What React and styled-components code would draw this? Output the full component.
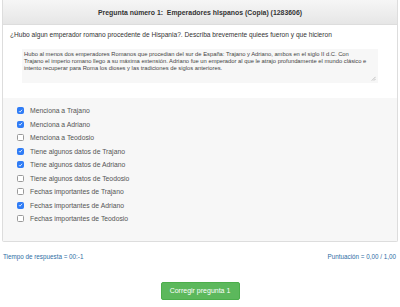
import React from "react";
import styled, { createGlobalStyle } from "styled-components";

const GlobalStyle = createGlobalStyle`
  body {
    margin: 0;
    background: #fff;
    font-family: "Liberation Sans", Arial, sans-serif;
  }
`;

const items = [
  { label: "Menciona a Trajano", checked: true },
  { label: "Menciona a Adriano", checked: true },
  { label: "Menciona a Teodosio", checked: false },
  { label: "Tiene algunos datos de Trajano", checked: true },
  { label: "Tiene algunos datos de Adriano", checked: true },
  { label: "Tiene algunos datos de Teodosio", checked: false },
  { label: "Fechas importantes de Trajano", checked: false },
  { label: "Fechas importantes de Adriano", checked: true },
  { label: "Fechas importantes de Teodosio", checked: false },
];

const answerLines = [
  "Hubo al menos dos emperadores Romanos que procedian del sur de España: Trajano y Adriano, ambos en el siglo II d.C. Con",
  "Trajano el imperio romano llego a su máxima extensión. Adriano fue un emperador al que le atrajo profundamente el mundo clásico e",
  "intento recuperar para Roma los dioses y las tradiciones de siglos anteriores.",
];

const App = () => {
  return (
    <Page>
      <GlobalStyle />
      <Panel>
        <Heading>Pregunta número 1:&nbsp; Emperadores hIspanos (Copia) (1283606)</Heading>
        <Body>
          <Question>
            ¿Hubo algun emperador romano procedente de Hispania?. Describa brevemente quiees fueron y que hicieron
          </Question>
          <Answer>
            {answerLines.map((line) => (
              <Line key={line}>{line}</Line>
            ))}
            <Grip viewBox="0 0 6 6">
              <path d="M5.5 1 L1 5.5 M5.5 3.5 L3.5 5.5" stroke="#999" strokeWidth="0.7" />
            </Grip>
          </Answer>
        </Body>
        <Checklist>
          {items.map((item) => (
            <Item key={item.label}>
              <Box $checked={item.checked}>
                {item.checked && (
                  <svg viewBox="0 0 8 8" width="6" height="6">
                    <path d="M1.5 4.2 L3.2 5.9 L6.5 2" fill="none" stroke="#fff" strokeWidth="1.3" />
                  </svg>
                )}
              </Box>
              <span>{item.label}</span>
            </Item>
          ))}
        </Checklist>
      </Panel>
      <Footer>
        <Info>Tiempo de respuesta = 00:-1</Info>
        <Info>Puntuación = 0,00 / 1,00</Info>
      </Footer>
      <Actions>
        <Button>Corregir pregunta 1</Button>
      </Actions>
    </Page>
  );
};

export default App;

const Page = styled.div`
  padding: 0 2px;
  width: 400px;
  box-sizing: border-box;
`;

const Panel = styled.section`
  border: 1px solid #ddd;
  border-top: none;
  border-radius: 0 0 2px 2px;
  background: #fff;
`;

const Heading = styled.div`
  height: 24px;
  display: flex;
  align-items: center;
  justify-content: center;
  background: linear-gradient(#f6f6f6, #e6e6e6);
  border-bottom: 1px solid #ddd;
  font-size: 6.9px;
  font-weight: bold;
  color: #333;
`;

const Body = styled.div`
  padding: 5px 7px 0;
`;

const Question = styled.p`
  margin: 0;
  font-size: 6.6px;
  line-height: 9px;
  color: #333;
`;

const Answer = styled.div`
  position: relative;
  margin: 10px 12px 0 12px;
  height: 34px;
  box-sizing: border-box;
  padding: 2px 2px;
  background: #f7f7f7;
  color: #444;
`;

const Line = styled.div`
  font-size: 5.8px;
  line-height: 7px;
  white-space: nowrap;
`;

const Grip = styled.svg`
  position: absolute;
  right: 2px;
  bottom: 2px;
  width: 5px;
  height: 5px;
`;

const Checklist = styled.div`
  margin-top: 15px;
  padding: 6px 0 15px 14px;
  background: #f7f7f7;
  display: flex;
  flex-direction: column;
`;

const Item = styled.label`
  display: flex;
  align-items: center;
  gap: 6px;
  height: 13.5px;
  font-size: 6.8px;
  color: #555;
`;

const Box = styled.span`
  width: 7px;
  height: 7px;
  box-sizing: border-box;
  border-radius: 1.5px;
  display: flex;
  align-items: center;
  justify-content: center;
  background: ${(p) => (p.$checked ? "#2f7cf6" : "#fff")};
  border: 1px solid ${(p) => (p.$checked ? "#2f7cf6" : "#9a9a9a")};
`;

const Footer = styled.div`
  display: flex;
  justify-content: space-between;
  padding: 11px 2px 0 1px;
  font-size: 6.3px;
  color: #2e6da4;
`;

const Info = styled.span``;

const Actions = styled.div`
  display: flex;
  justify-content: center;
  padding-top: 22px;
`;

const Button = styled.button`
  width: 79px;
  height: 18px;
  border: 1px solid #4cae4c;
  border-radius: 2px;
  background: #5cb85c;
  color: #fff;
  font-family: "Liberation Sans", Arial, sans-serif;
  font-size: 7px;
  padding: 0;
`;
